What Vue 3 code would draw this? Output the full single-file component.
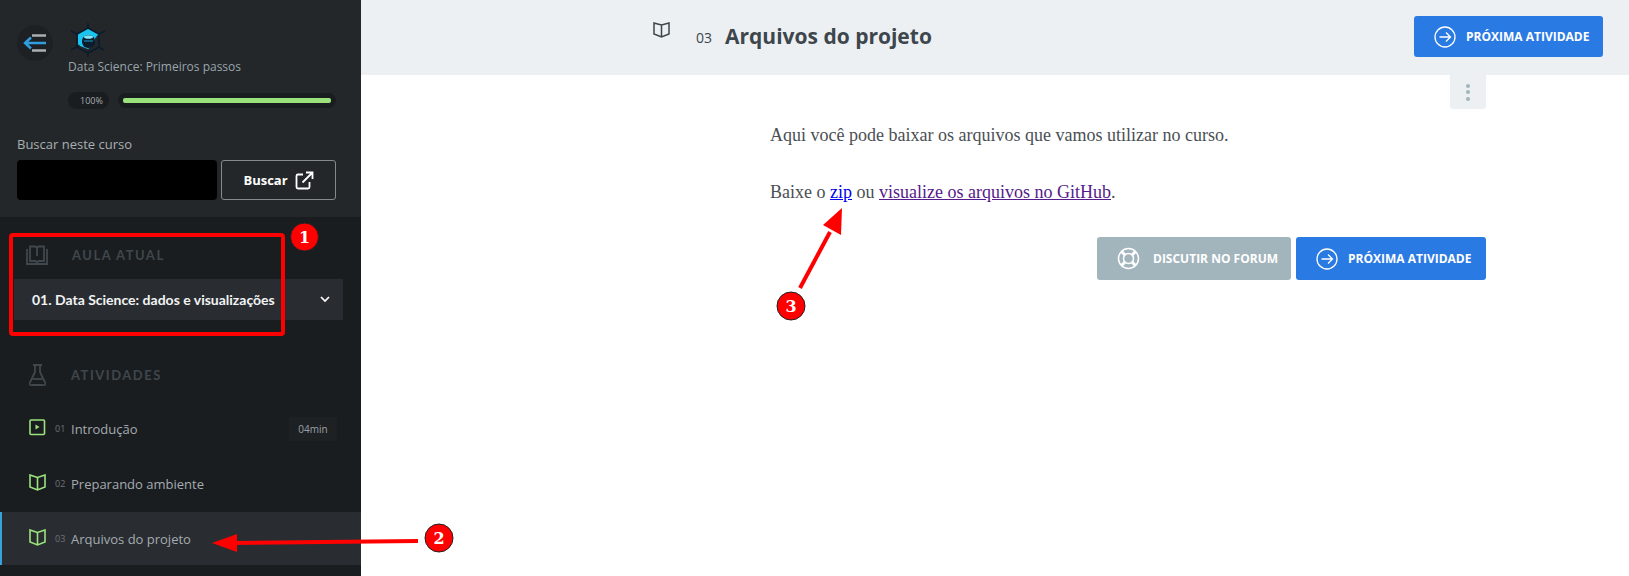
<template>
  <div class="page">
    <aside class="sidebar">
      <div class="sidebar-top">
        <div class="course-head">
          <button class="back-btn" type="button">
            <svg width="24" height="18" viewBox="0 0 24 18" fill="none" stroke-width="2.4">
              <path d="M9 1.5h14M9 16.5h14" stroke="#a9afb3" />
              <path d="M2 9h21M8 3.5 2 9l6 5.5" stroke="#2f9fe0" />
            </svg>
          </button>
          <div class="course-info">
            <svg class="logo" width="36" height="36" viewBox="0 0 36 36" fill="none">
              <g stroke="#0b1c2e" stroke-width="1.6">
                <path d="M18 1v6M18 29v6M1 9l6 3M35 9l-6 3M1 28l6-3M29 25l5 3" />
                <path d="M7 12 18 6l11 6v13l-11 6-11-6z" />
              </g>
              <path d="M8 12.500 18 7l10 5.500-3 4v3l-3 1V14H11v10l-3-1.500z" fill="#19c5ee" />
              <path d="M10 14h12v10l-4 3-8-3z" fill="#19c5ee" />
              <rect x="12" y="13" width="13" height="13" rx="6" fill="#0b1c2e" />
              <ellipse cx="18.500" cy="15" rx="4.500" ry="1.800" fill="#7fe3f7" />
              <path d="M14 19h9" stroke="#19c5ee" stroke-width="0.800" />
            </svg>
            <p class="course-name">Data Science: Primeiros passos</p>
          </div>
        </div>
        <div class="progress-row">
          <span class="progress-pill">100%</span>
          <div class="progress-track">
            <div class="progress-fill" :style="{ width: progress + '%' }"></div>
          </div>
        </div>
        <label class="search-label">Buscar neste curso</label>
        <div class="search-row">
          <input class="search-input" type="text" />
          <button class="search-btn" type="button">
            Buscar
            <svg width="19" height="19" viewBox="0 0 19 19" fill="none" stroke="#fff" stroke-width="1.800">
              <path d="M8 3.500H3a1.500 1.500 0 0 0-1.500 1.500v11A1.500 1.500 0 0 0 3 17.500h10a1.500 1.500 0 0 0 1.500-1.500v-5" />
              <path d="M7.500 11.500 17.500 1.500M11 1.500h6.500V8" />
            </svg>
          </button>
        </div>
      </div>

      <div class="sidebar-body">
        <div class="section-title lesson-title">
          <svg width="22" height="20" viewBox="0 0 22 20" fill="none" stroke="#40484d" stroke-width="1.800">
            <path d="M1 4v15h20V4" />
            <path d="M4 1.500h5.500L11 3l1.500-1.500H18V16h-5.500L11 17.500 9.500 16H4z" />
            <path d="M11 3v8" />
          </svg>
          <span>AULA ATUAL</span>
        </div>
        <div class="lesson-select">
          <span>01. Data Science: dados e visualizações</span>
          <svg width="10" height="7" viewBox="0 0 10 7" fill="none" stroke="#fff" stroke-width="1.700">
            <path d="m1 1 4 4 4-4" />
          </svg>
        </div>

        <div class="section-title activities-title">
          <svg width="17" height="22" viewBox="0 0 17 22" fill="none" stroke="#40484d" stroke-width="1.800">
            <path d="M4 1h9M6 1v7L1.500 17.500A2 2 0 0 0 3.500 21h10a2 2 0 0 0 2-3.500L11 8V1" />
            <path d="M3.500 15h10" />
          </svg>
          <span>ATIVIDADES</span>
        </div>

        <ul class="activity-list">
          <li v-for="item in activities" :key="item.num" class="activity" :class="{ current: item.current }">
            <svg v-if="item.type === 'video'" class="activity-icon" width="17" height="17" viewBox="0 0 17 17" fill="none">
              <rect x="1" y="1" width="14.500" height="14.500" rx="1" stroke="#9be27d" stroke-width="1.600" />
              <path d="M6.500 5.500v5l4-2.500z" fill="#9be27d" />
            </svg>
            <svg v-else class="activity-icon" width="17" height="17" viewBox="0 0 17 17" fill="none" stroke="#9be27d" stroke-width="1.600">
              <path d="M8.500 3.500 1 1v12l7.500 3 7.500-3V1zM8.500 3.500V16" />
            </svg>
            <span class="activity-num">{{ item.num }}</span>
            <span class="activity-name">{{ item.name }}</span>
            <span v-if="item.time" class="activity-time">{{ item.time }}</span>
          </li>
        </ul>
      </div>
    </aside>

    <main class="main">
      <header class="topbar">
        <svg class="top-icon" width="17" height="16" viewBox="0 0 17 16" fill="none" stroke="#3d464d" stroke-width="1.500">
          <path d="M8.500 3 1 1v11l7.500 3 7.500-3V1zM8.500 3v12" />
        </svg>
        <span class="top-num">03</span>
        <h1 class="top-title">Arquivos do projeto</h1>
        <button class="action primary top-action" type="button">
          <svg width="22" height="22" viewBox="0 0 22 22" fill="none" stroke="#fff" stroke-width="1.300">
            <circle cx="11" cy="11" r="10" />
            <path d="M5.500 11h11M12 6.500l4.500 4.500-4.500 4.500" />
          </svg>
          PRÓXIMA ATIVIDADE
        </button>
      </header>

      <div class="content">
        <div class="kebab">
          <i></i><i></i><i></i>
        </div>
        <p class="text first">Aqui você pode baixar os arquivos que vamos utilizar no curso.</p>
        <p class="text second">
          Baixe o <a class="link-new" href="#">zip</a> ou
          <a class="link-visited" href="#">visualize os arquivos no GitHub</a>.
        </p>
        <div class="actions">
          <button class="action muted" type="button">
            <svg width="23" height="23" viewBox="0 0 23 23" fill="none" stroke="#fff" stroke-width="1.500">
              <circle cx="11.500" cy="11.500" r="10" />
              <circle cx="11.500" cy="11.500" r="5" />
              <path d="m4.500 4.500 3.500 3.500M18.500 4.500 15 8M4.500 18.500 8 15M18.500 18.500 15 15" stroke-width="3" />
            </svg>
            DISCUTIR NO FORUM
          </button>
          <button class="action primary" type="button">
            <svg width="22" height="22" viewBox="0 0 22 22" fill="none" stroke="#fff" stroke-width="1.300">
              <circle cx="11" cy="11" r="10" />
              <path d="M5.500 11h11M12 6.500l4.500 4.500-4.500 4.500" />
            </svg>
            PRÓXIMA ATIVIDADE
          </button>
        </div>
      </div>
    </main>

    <!-- anotacoes por cima da tela -->
    <svg class="notes" width="1629" height="576" viewBox="0 0 1629 576" fill="none">
      <rect x="11" y="235" width="272" height="99" rx="2" stroke="#f00" stroke-width="4" />
      <path d="M418 541 232 543" stroke="#f00" stroke-width="4" />
      <path d="m212 543 25-9 0 18z" fill="#f00" />
      <path d="M800 288 830 232" stroke="#f00" stroke-width="4" />
      <path d="m842 208-1 27-18-10z" fill="#f00" />
      <g v-for="n in notes" :key="n.label">
        <circle :cx="n.x" :cy="n.y" r="14" fill="#f00" stroke="#222" stroke-width="1" />
        <text :x="n.x" :y="n.y + 6" text-anchor="middle" class="note-label">{{ n.label }}</text>
      </g>
    </svg>
  </div>
</template>

<script setup>
const progress = 100;

const activities = [
  { num: '01', name: 'Introdução', type: 'video', time: '04min' },
  { num: '02', name: 'Preparando ambiente', type: 'book' },
  { num: '03', name: 'Arquivos do projeto', type: 'book', current: true },
];

const notes = [
  { label: '1', x: 304.5, y: 237 },
  { label: '2', x: 439, y: 538 },
  { label: '3', x: 791, y: 306 },
];
</script>

<style>
html, body {
  margin: 0;
  background: #fff;
  overflow: hidden;
}
</style>

<style scoped>
.page {
  position: relative;
  display: flex;
  width: 1629px;
  height: 576px;
  overflow: hidden;
  font-family: "Open Sans", sans-serif;
}

.sidebar {
  width: 361px;
  flex-shrink: 0;
  display: flex;
  flex-direction: column;
  background: #1a1d20;
}

.sidebar-top {
  height: 217px;
  box-sizing: border-box;
  padding: 22px 25px 0 17px;
  background: #23272a;
}

.course-head {
  display: flex;
  gap: 15px;
}

.back-btn {
  width: 36px;
  height: 36px;
  margin-top: 3px;
  padding: 0;
  display: flex;
  align-items: center;
  justify-content: center;
  border: 0;
  border-radius: 50%;
  background: #1e2124;
}

.logo {
  display: block;
  margin-left: 2px;
}

.course-name {
  margin: 1px 0 0;
  font-size: 12px;
  line-height: 16px;
  color: #9aa5ab;
}

.progress-row {
  display: flex;
  align-items: center;
  gap: 9px;
  margin: 17px 0 0 51px;
}

.progress-pill {
  width: 41px;
  height: 17px;
  box-sizing: border-box;
  padding-left: 12px;
  border-radius: 9px;
  background: #1a1d20;
  font-size: 9px;
  line-height: 17px;
  color: #a4abb0;
}

.progress-track {
  width: 220px;
  height: 15px;
  box-sizing: border-box;
  padding: 5px;
  border-radius: 8px;
  background: #1a1d20;
}

.progress-fill {
  height: 5px;
  border-radius: 2px;
  background: #9be27d;
}

.search-label {
  display: block;
  margin-top: 26px;
  font-size: 13px;
  line-height: 18px;
  color: #a9afb3;
}

.search-row {
  display: flex;
  gap: 4px;
  margin-top: 7px;
}

.search-input {
  width: 200px;
  height: 40px;
  box-sizing: border-box;
  border: 0;
  border-radius: 4px;
  background: #000;
}

.search-btn {
  width: 115px;
  height: 40px;
  display: flex;
  align-items: center;
  justify-content: center;
  gap: 7px;
  border: 1px solid #858a8d;
  border-radius: 3px;
  background: transparent;
  font-family: "Open Sans", sans-serif;
  font-size: 13px;
  font-weight: 700;
  color: #fff;
}

.sidebar-body {
  flex: 1;
  padding-top: 28px;
}

.section-title {
  display: flex;
  align-items: center;
  font-family: Lato, sans-serif;
  font-size: 13px;
  font-weight: 700;
  letter-spacing: 1.5px;
  color: #3f474c;
}

.lesson-title {
  height: 20px;
  padding-left: 26px;
  gap: 24px;
}

.lesson-select {
  display: flex;
  align-items: center;
  justify-content: space-between;
  width: 329px;
  height: 41px;
  box-sizing: border-box;
  margin: 14px 0 0 14px;
  padding: 0 13px 0 18px;
  background: #292d31;
  font-family: Lato, sans-serif;
  font-size: 14px;
  font-weight: 700;
  color: #f2f3f4;
}

.activities-title {
  height: 22px;
  margin-top: 44px;
  padding-left: 29px;
  gap: 25px;
}

.activity-list {
  list-style: none;
  margin: 15px 0 0;
  padding: 0;
}

.activity {
  display: flex;
  align-items: center;
  height: 55px;
  padding-left: 29px;
  padding-right: 24px;
  font-size: 13px;
  color: #a4abb0;
}

.activity.current {
  height: 53px;
  margin-top: 1px;
  padding-left: 27px;
  border-left: 2px solid #3aa0dc;
  background: #292d31;
}

.activity-icon {
  flex-shrink: 0;
  margin-top: -3px;
}

.activity-num {
  width: 16px;
  margin-left: 9px;
  font-size: 9px;
  color: #6d7479;
}

.activity-name {
  flex: 1;
}

.activity-time {
  width: 48px;
  height: 24px;
  border-radius: 2px;
  background: #1e2124;
  font-size: 10px;
  line-height: 24px;
  text-align: center;
  color: #9aa1a6;
}

.main {
  flex: 1;
  min-width: 0;
}

.topbar {
  display: flex;
  align-items: flex-start;
  height: 75px;
  box-sizing: border-box;
  padding: 22px 26px 0 292px;
  background: #edf0f2;
  color: #3d464d;
}

.top-num {
  margin: 6px 0 0 26px;
  font-size: 14px;
  line-height: 19px;
}

.top-title {
  margin: 0 0 0 13px;
  font-size: 21px;
  line-height: 29px;
  font-weight: 700;
}

.action {
  display: flex;
  align-items: center;
  height: 43px;
  box-sizing: border-box;
  border: 0;
  border-radius: 3px;
  font-family: "Open Sans", sans-serif;
  font-size: 12px;
  font-weight: 700;
  color: #fff;
}

.primary {
  width: 190px;
  gap: 10px;
  padding: 0 0 0 20px;
  background: #2a7ae4;
}

.top-action {
  width: 189px;
  height: 41px;
  margin: -6px 0 0 auto;
}

.muted {
  width: 194px;
  gap: 13px;
  padding: 0 0 0 20px;
  background: #a3b5bc;
}

.content {
  position: relative;
  width: 716px;
  margin-left: 409px;
}

.kebab {
  position: absolute;
  top: 0;
  right: 0;
  width: 36px;
  height: 34px;
  display: flex;
  flex-direction: column;
  align-items: center;
  justify-content: center;
  gap: 2.500px;
  border-radius: 0 0 3px 3px;
  background: #edf0f2;
}

.kebab i {
  width: 4px;
  height: 4px;
  border-radius: 50%;
  background: #a3b5bc;
}

.text {
  margin: 0;
  font-family: "Liberation Serif", serif;
  font-size: 18px;
  line-height: 28px;
  color: #4a4f53;
}

.first {
  padding-top: 46px;
}

.second {
  margin-top: 29px;
}

.link-new {
  color: #00e;
}

.link-visited {
  color: #551a8b;
}

.actions {
  display: flex;
  justify-content: flex-end;
  gap: 5px;
  margin-top: 31px;
}

.notes {
  position: absolute;
  top: 0;
  left: 0;
  pointer-events: none;
}

.note-label {
  font-family: "DejaVu Serif", serif;
  font-size: 16px;
  font-weight: 700;
  fill: #fff;
}
</style>
